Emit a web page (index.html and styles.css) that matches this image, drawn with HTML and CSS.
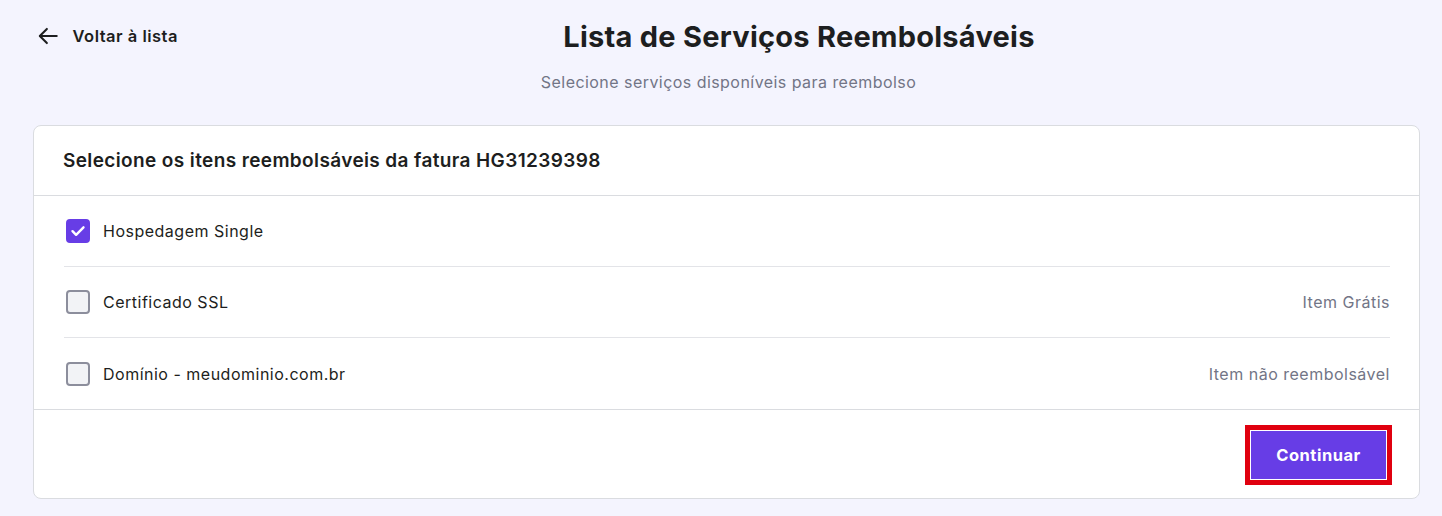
FILE: index.html
```html
<!DOCTYPE html>
<html lang="pt-BR">
<head>
<meta charset="utf-8">
<link rel="stylesheet" href="styles.css">
</head>
<body>
<div class="page">
  <header class="top">
    <a class="back" href="#">
      <svg width="24" height="24" viewBox="0 0 24 24" fill="none" stroke="#1d1e20" stroke-width="2.2" stroke-linecap="round" stroke-linejoin="round"><path d="M21 12H3.5"/><path d="M10.5 4.5L3 12l7.5 7.5"/></svg>
      <span>Voltar à lista</span>
    </a>
    <h1 class="title">Lista de Serviços Reembolsáveis</h1>
  </header>
  <p class="subtitle">Selecione serviços disponíveis para reembolso</p>
  <section class="card">
    <div class="card-head">Selecione os itens reembolsáveis da fatura HG31239398</div>
    <div class="list">
      <label class="row">
        <span class="check checked"><svg width="18" height="18" viewBox="0 0 18 18" fill="none" stroke="#fff" stroke-width="2.4" stroke-linecap="round" stroke-linejoin="round"><path d="M3.5 9.2l3.6 3.6L14.5 5.3"/></svg></span>
        <span class="name">Hospedagem Single</span>
      </label>
      <label class="row">
        <span class="check"></span>
        <span class="name">Certificado SSL</span>
        <span class="note">Item Grátis</span>
      </label>
      <label class="row">
        <span class="check"></span>
        <span class="name">Domínio - meudominio.com.br</span>
        <span class="note">Item não reembolsável</span>
      </label>
    </div>
    <div class="card-foot">
      <button class="btn">Continuar</button>
    </div>
  </section>
</div>
</body>
</html>
```
FILE: styles.css
```css
* { box-sizing: border-box; }
html, body { margin: 0; padding: 0; }
body {
  background: #f4f4fe;
  font-family: Inter, "Noto Sans", sans-serif;
  color: #1d1e20;
  width: 1442px;
  height: 516px;
  overflow: hidden;
}
.page { padding: 14px 22px 0 33px; }
.top {
  display: flex;
  align-items: center;
  height: 44px;
}
.back {
  display: flex;
  align-items: center;
  gap: 13px;
  padding-left: 4px;
  text-decoration: none;
  color: #1d1e20;
  font-weight: 600;
  font-size: 16.5px;
  letter-spacing: 0.5px;
  width: 145px;
  flex: none;
  white-space: nowrap;
}
.title {
  flex: 1;
  margin: 0;
  text-align: center;
  font-size: 29px;
  font-weight: 700;
  letter-spacing: 0.25px;
}
.subtitle {
  margin: 14px 0 0;
  text-align: center;
  font-size: 16px;
  letter-spacing: 0.45px;
  color: #727586;
  padding-left: 4px;
}
.card {
  margin-top: 33px;
  width: 1387px;
  background: #fff;
  border: 1px solid #dadce0;
  border-radius: 8px;
}
.card-head {
  height: 70px;
  display: flex;
  align-items: center;
  padding: 0 29px;
  font-size: 19px;
  font-weight: 600;
  letter-spacing: 0.38px;
  border-bottom: 1px solid #dadce0;
}
.list { padding: 0 29px 0 30px; }
.row {
  height: 71px;
  display: flex;
  align-items: center;
  gap: 13px;
  font-size: 16px;
  letter-spacing: 0.5px;
  border-bottom: 1px solid #e3e4e8;
  padding-left: 2px;
}
.row:last-child { border-bottom: none; }
.check {
  width: 24px;
  height: 24px;
  border-radius: 4px;
  border: 2px solid #8c8e9c;
  background: #f2f3f6;
  display: flex;
  align-items: center;
  justify-content: center;
  flex: none;
}
.check.checked { background: #673de6; border-color: #673de6; }
.name { color: #1d1e20; }
.note { margin-left: auto; color: #727586; }
.card-foot {
  border-top: 1px solid #dadce0;
  height: 89px;
  display: flex;
  align-items: center;
  justify-content: flex-end;
  padding-right: 27px;
}
.btn {
  margin-top: 2px;
  width: 147px;
  height: 60px;
  background: #673de6;
  color: #fff;
  font-family: inherit;
  font-size: 16.5px;
  font-weight: 700;
  letter-spacing: 0.5px;
  border: 1px solid #fff;
  outline: 3px solid #e0000f;
  outline-offset: -3px;
  box-shadow: inset 0 0 0 4px #e0000f, inset 0 0 0 5px #fff;
  border-radius: 0;
  cursor: pointer;
}
```
